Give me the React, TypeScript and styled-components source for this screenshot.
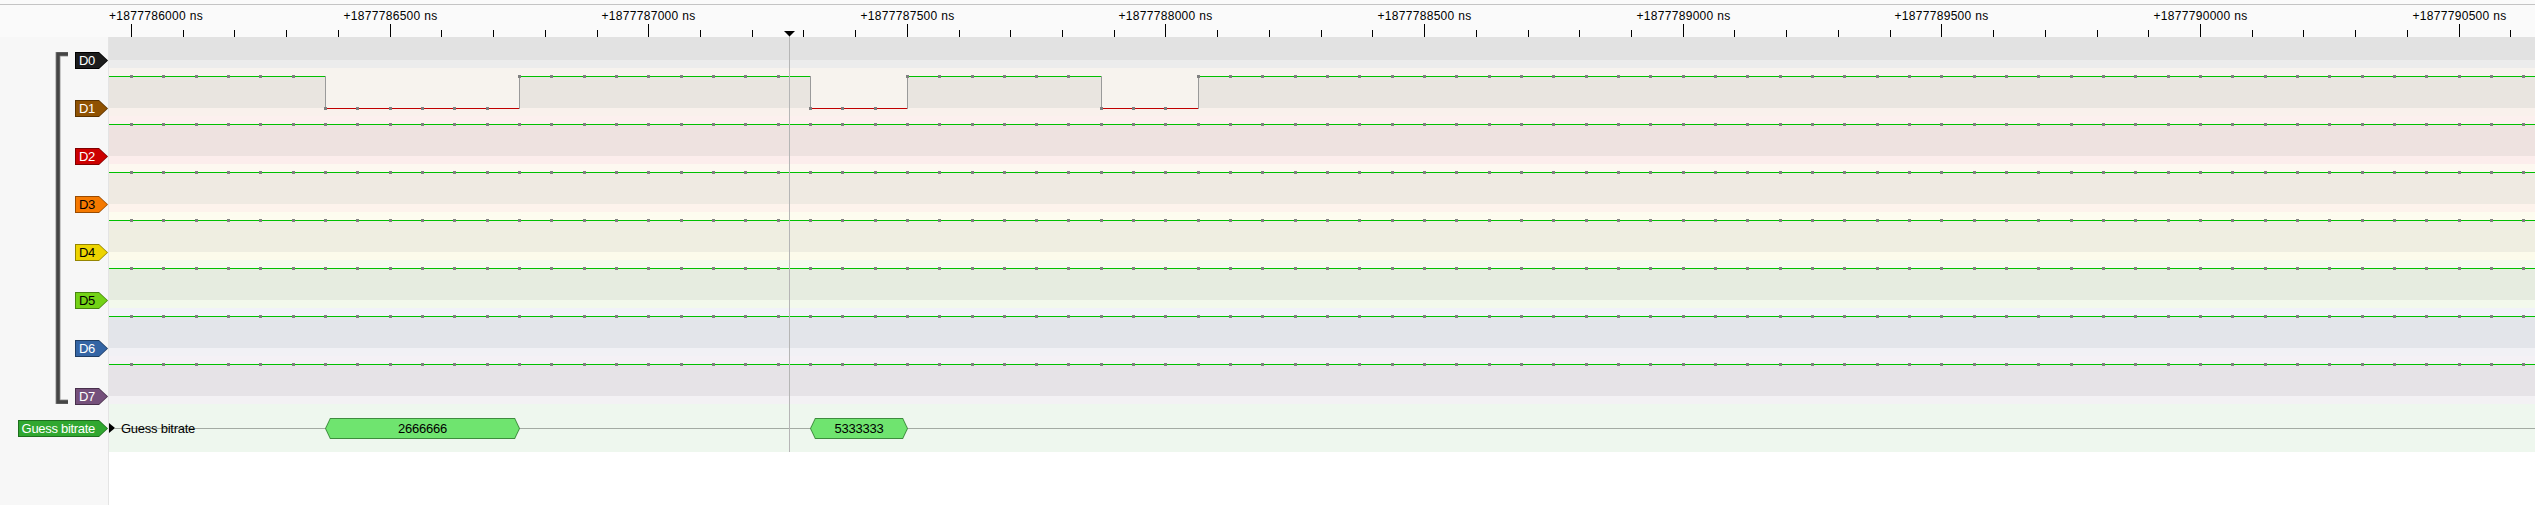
import React from 'react';
import styled, { createGlobalStyle } from 'styled-components';

const PAGE_W = 2535;
const VIEW_LEFT = 109;
const VIEW_W = PAGE_W - VIEW_LEFT;
const T0_X = 131.5;
const MAJOR_PX = 258.62;
const SAMPLE_PX = MAJOR_PX / 8;
const ROW_H = 48;
const CURSOR_X = 789;

const pageCol = (x: number) => Math.floor(x);
const sampleCol = (k: number) => pageCol(T0_X + k * SAMPLE_PX) - VIEW_LEFT;
const SAMPLE_COUNT = Math.ceil((PAGE_W - T0_X) / SAMPLE_PX) + 1;

interface Channel {
  name: string;
  fill: string;
  edge: string;
  ink: string;
  band: string;
  strip: string;
  toggles: number[] | null;
}

const channels: Channel[] = [
  { name: 'D0', fill: '#1c1c1c', edge: '#000000', ink: '#ffffff', band: '#e2e2e2', strip: '#ececec', toggles: null },
  { name: 'D1', fill: '#8f5202', edge: '#5a3300', ink: '#ffffff', band: '#f7f3ee', strip: '#f9f1ec', toggles: [6, 12, 21, 24, 30, 33] },
  { name: 'D2', fill: '#cc0000', edge: '#7f0000', ink: '#ffffff', band: '#fcf0ee', strip: '#fcedec', toggles: [] },
  { name: 'D3', fill: '#f57900', edge: '#9a4c00', ink: '#000000', band: '#fdf8f0', strip: '#fdf3ec', toggles: [] },
  { name: 'D4', fill: '#edd400', edge: '#958500', ink: '#000000', band: '#fdfcef', strip: '#fcfbeb', toggles: [] },
  { name: 'D5', fill: '#73d216', edge: '#48840e', ink: '#000000', band: '#f4faee', strip: '#f3f9ec', toggles: [] },
  { name: 'D6', fill: '#3465a4', edge: '#1f3d63', ink: '#ffffff', band: '#f1f3f8', strip: '#f1f1f5', toggles: [] },
  { name: 'D7', fill: '#75507b', edge: '#47304b', ink: '#ffffff', band: '#f4f1f5', strip: '#f3f1f4', toggles: [] },
];

const annotations = [
  { text: '2666666', from: 6, to: 12 },
  { text: '5333333', from: 21, to: 24 },
];

const GlobalStyle = createGlobalStyle`
  html, body {
    margin: 0;
    padding: 0;
    background: #ffffff;
  }
  body {
    font-family: "Liberation Sans", Arial, sans-serif;
  }
`;

const Window = styled.div`
  width: ${PAGE_W}px;
  height: 505px;
  display: flex;
  flex-direction: column;
  overflow: hidden;
  background: #ffffff;
`;

const TopEdge = styled.div`
  height: 4px;
  flex: none;
  background: #fafafa;
  border-bottom: 1px solid #c4c4c4;
`;

const RulerSvg = styled.svg`
  display: block;
  flex: none;
  background: #fafafa;
  font-family: "Liberation Sans", Arial, sans-serif;
  font-size: 12px;
  letter-spacing: 0.3px;
`;

const Body = styled.div`
  flex: 1;
  display: flex;
  min-height: 0;
`;

const HeaderColumn = styled.div`
  width: 108px;
  flex: none;
  background: #f7f7f7;
  border-right: 1px solid #e4e4e4;
  overflow: hidden;
`;

const HeaderInner = styled.div`
  margin-top: -17px;
  display: flex;
  flex-direction: column;
`;

const GroupBlock = styled.div`
  height: ${ROW_H * 8}px;
  display: flex;
  align-items: flex-start;
`;

const Bracket = styled.svg`
  display: block;
  flex: none;
  margin: 32px 0 0 54px;
`;

const LabelStack = styled.div`
  margin-left: auto;
  display: flex;
  flex-direction: column;
  align-items: flex-end;
`;

const TraceHead = styled.div`
  height: ${ROW_H}px;
  padding-top: 32px;
  box-sizing: border-box;
  display: flex;
  justify-content: flex-end;
`;

const DecoderHead = styled(TraceHead)`
  padding-top: 16px;
`;

const Tag = styled.div<{ $edge: string }>`
  display: flex;
  height: 17px;
  padding: 1px;
  box-sizing: border-box;
  background: ${({ $edge }) => $edge};
  clip-path: polygon(0 0, calc(100% - 9px) 0, 100% 50%, calc(100% - 9px) 100%, 0 100%);
`;

const TagFace = styled.span<{ $fill: string; $ink: string }>`
  display: flex;
  align-items: center;
  padding: 0 12px 0 3px;
  background: ${({ $fill }) => $fill};
  color: ${({ $ink }) => $ink};
  font-size: 13px;
  letter-spacing: -0.3px;
  line-height: 1;
  clip-path: polygon(0 0, calc(100% - 8px) 0, 100% 50%, calc(100% - 8px) 100%, 0 100%);
`;

const Viewport = styled.div`
  flex: 1;
  position: relative;
  overflow: hidden;
  background: #ffffff;
`;

const TraceStack = styled.div`
  margin-top: -17px;
  display: flex;
  flex-direction: column;
`;

const TraceRow = styled.div<{ $band: string; $strip: string }>`
  height: ${ROW_H}px;
  background: linear-gradient(
    to bottom,
    ${({ $band }) => $band} 0 40px,
    ${({ $strip }) => $strip} 40px 48px
  );
`;

const WaveSvg = styled.svg`
  display: block;
`;

const DecoderRow = styled.div`
  position: relative;
  height: ${ROW_H}px;
  display: flex;
  align-items: center;
  background: linear-gradient(#a3aba3, #a3aba3) 6px 24px / 100% 1px no-repeat, #eef7ee;
`;

const ExpandArrow = styled.span`
  width: 0;
  height: 0;
  border-left: 6px solid #000000;
  border-top: 5px solid transparent;
  border-bottom: 5px solid transparent;
`;

const DecoderTitle = styled.span`
  margin-left: 6px;
  font-size: 13px;
  letter-spacing: -0.25px;
  line-height: 1;
  color: #000000;
`;

const Annotation = styled.div`
  position: absolute;
  top: 14px;
  height: 21px;
  padding: 1px;
  box-sizing: border-box;
  display: flex;
  background: #3d8c3d;
  clip-path: polygon(5px 0, calc(100% - 5px) 0, 100% 50%, calc(100% - 5px) 100%, 5px 100%, 0 50%);
`;

const AnnotationFace = styled.span`
  flex: 1;
  display: flex;
  align-items: center;
  justify-content: center;
  background: #6fe46f;
  color: #000000;
  font-size: 13px;
  letter-spacing: -0.2px;
  line-height: 1;
  clip-path: polygon(4.5px 0, calc(100% - 4.5px) 0, 100% 50%, calc(100% - 4.5px) 100%, 4.5px 100%, 0 50%);
`;

const Cursor = styled.div`
  position: absolute;
  left: ${CURSOR_X - VIEW_LEFT}px;
  top: 0;
  width: 1px;
  height: ${ROW_H * 9 - 17}px;
  background: #b6b6b6;
`;

function Ruler() {
  const majors = Array.from({ length: 10 }, (_, m) => pageCol(T0_X + m * MAJOR_PX));
  const minors = Array.from({ length: 50 }, (_, n) => pageCol(T0_X + (n * MAJOR_PX) / 5)).filter(
    (x) => x < PAGE_W
  );
  return (
    <RulerSvg width={PAGE_W} height={32}>
      {minors.map((x) => (
        <rect key={`n${x}`} x={x} y={25} width={1} height={7} fill="#000" />
      ))}
      {majors.map((x, m) => (
        <g key={`m${x}`}>
          <rect x={x} y={19} width={1} height={13} fill="#000" />
          <text
            x={m === 0 ? VIEW_LEFT : x + 0.5}
            y={15}
            textAnchor={m === 0 ? 'start' : 'middle'}
            fill="#000"
          >
            {`+${1877786000 + m * 500} ns`}
          </text>
        </g>
      ))}
      <rect x={CURSOR_X} y={30} width={1} height={2} fill="#b6b6b6" />
      <polygon
        points={`${CURSOR_X - 5},26 ${CURSOR_X + 6},26 ${CURSOR_X + 0.5},31.5`}
        fill="#000"
      />
    </RulerSvg>
  );
}

function Waveform({ toggles }: { toggles: number[] | null }) {
  if (!toggles) return <WaveSvg width={VIEW_W} height={ROW_H} />;

  const levels: boolean[] = [];
  let high = true;
  for (let k = 0; k < SAMPLE_COUNT; k++) {
    if (toggles.includes(k)) high = !high;
    levels.push(high);
  }

  const segs: { x0: number; x1: number; high: boolean }[] = [];
  let start = 0;
  let level = levels[0];
  for (let k = 1; k < SAMPLE_COUNT; k++) {
    if (levels[k] !== level) {
      segs.push({ x0: start, x1: sampleCol(k), high: level });
      start = sampleCol(k);
      level = levels[k];
    }
  }
  segs.push({ x0: start, x1: VIEW_W, high: level });

  return (
    <WaveSvg width={VIEW_W} height={ROW_H}>
      {segs.map((s, i) =>
        s.high ? (
          <g key={i}>
            <rect x={s.x0} y={9} width={s.x1 - s.x0} height={31} fill="rgba(0,0,0,0.055)" />
            <rect x={s.x0} y={8} width={s.x1 - s.x0 + 1} height={1} fill="#00c000" />
          </g>
        ) : (
          <rect key={i} x={s.x0} y={40} width={s.x1 - s.x0 + 1} height={1} fill="#c00000" />
        )
      )}
      {segs.slice(1).map((s) => (
        <rect key={`e${s.x0}`} x={s.x0} y={8} width={1} height={33} fill="#9a9a9a" />
      ))}
      {levels.map((h, k) => (
        <rect
          key={`s${k}`}
          x={sampleCol(k) - 1}
          y={h ? 7 : 39}
          width={3}
          height={3}
          fill="#808080"
        />
      ))}
    </WaveSvg>
  );
}

export default function App() {
  return (
    <>
      <GlobalStyle />
      <Window>
        <TopEdge />
        <Ruler />
        <Body>
          <HeaderColumn>
            <HeaderInner>
              <GroupBlock>
                <Bracket width={16} height={352}>
                  <path d="M14 2 H4 V350 H14" fill="none" stroke="#9a9a9a" strokeWidth={5} />
                  <path d="M14 2 H4 V350 H14" fill="none" stroke="#454545" strokeWidth={3.4} />
                </Bracket>
                <LabelStack>
                  {channels.map((c) => (
                    <TraceHead key={c.name}>
                      <Tag $edge={c.edge}>
                        <TagFace $fill={c.fill} $ink={c.ink}>
                          {c.name}
                        </TagFace>
                      </Tag>
                    </TraceHead>
                  ))}
                </LabelStack>
              </GroupBlock>
              <DecoderHead>
                <Tag $edge="#1d6f1d">
                  <TagFace $fill="#30a730" $ink="#ffffff">
                    Guess bitrate
                  </TagFace>
                </Tag>
              </DecoderHead>
            </HeaderInner>
          </HeaderColumn>
          <Viewport>
            <TraceStack>
              {channels.map((c) => (
                <TraceRow key={c.name} $band={c.band} $strip={c.strip}>
                  <Waveform toggles={c.toggles} />
                </TraceRow>
              ))}
              <DecoderRow>
                <ExpandArrow />
                <DecoderTitle>Guess bitrate</DecoderTitle>
                {annotations.map((a) => {
                  const left = sampleCol(a.from);
                  const width = sampleCol(a.to) - left + 1;
                  return (
                    <Annotation key={a.text} style={{ left, width }}>
                      <AnnotationFace>{a.text}</AnnotationFace>
                    </Annotation>
                  );
                })}
              </DecoderRow>
            </TraceStack>
            <Cursor />
          </Viewport>
        </Body>
      </Window>
    </>
  );
}
